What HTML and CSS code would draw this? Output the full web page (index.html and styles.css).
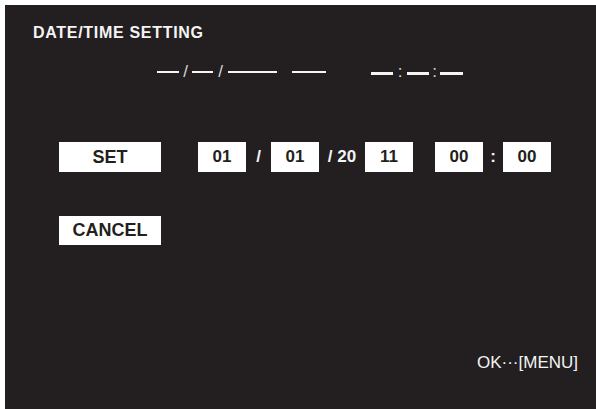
FILE: index.html
```html
<!DOCTYPE html>
<html>
<head>
<meta charset="utf-8">
<link rel="stylesheet" href="styles.css">
</head>
<body>
<div class="screen">
  <div class="title">DATE/TIME SETTING</div>
  <div class="current">
    <span class="dash w22"></span><span class="sep s13">/</span><span class="dash w21"></span><span class="sep s15">/</span><span class="dash w49"></span>
    <span class="dash w34 ml15"></span>
    <div class="time">
      <span class="dash w22"></span><span class="sep colon s14">:</span><span class="dash w22"></span><span class="sep colon s11">:</span><span class="dash w23"></span>
    </div>
  </div>
  <div class="setrow">
    <div class="btn">SET</div>
    <div class="field ml37">01</div>
    <div class="fsep f25">/</div>
    <div class="field">01</div>
    <div class="fsep f46">/ 20</div>
    <div class="field">11</div>
    <div class="field ml22">00</div>
    <div class="fsep f20">:</div>
    <div class="field">00</div>
  </div>
  <div class="cancelrow">
    <div class="btn cancel">CANCEL</div>
  </div>
  <div class="hint">OK···[MENU]</div>
</div>
</body>
</html>
```
FILE: styles.css
```css
html, body {
  margin: 0;
  padding: 0;
  background: #ffffff;
}
body {
  width: 596px;
  height: 409px;
  overflow: hidden;
  font-family: "Liberation Sans", Arial, sans-serif;
}
.screen {
  margin: 5px 0 0 5px;
  width: 591px;
  height: 404px;
  background: #231f20;
  color: #f4f4f4;
  display: flex;
  flex-direction: column;
}
.title {
  padding: 19px 0 0 28px;
  font-size: 16px;
  line-height: 18px;
  font-weight: bold;
  letter-spacing: 0.7px;
}
.current {
  margin-top: 22px;
  height: 16px;
  padding-left: 152px;
  display: flex;
  align-items: center;
}
.time {
  display: flex;
  align-items: center;
  margin-left: 45px;
  padding-top: 3px;
}
.dash {
  display: block;
  height: 2.5px;
  background: #f4f4f4;
}
.w21 { width: 21px; }
.w22 { width: 22px; }
.w23 { width: 23px; }
.w34 { width: 34px; }
.w49 { width: 49px; }
.ml15 { margin-left: 15px; }
.sep {
  display: block;
  text-align: center;
  font-size: 17px;
  line-height: 16px;
  color: #d8d8d8;
}
.colon {
  padding-bottom: 3px;
}
.s11 { width: 11px; }
.s13 { width: 13px; }
.s14 { width: 14px; }
.s15 { width: 15px; }
.setrow {
  margin-top: 62px;
  padding-left: 54px;
  display: flex;
  height: 30px;
}
.btn {
  width: 102px;
  height: 30px;
  background: #ffffff;
  color: #231f20;
  font-weight: bold;
  font-size: 18px;
  line-height: 30px;
  text-align: center;
}
.field {
  width: 48px;
  height: 30px;
  background: #ffffff;
  color: #231f20;
  font-weight: bold;
  font-size: 17px;
  line-height: 30px;
  text-align: center;
}
.ml37 { margin-left: 37px; }
.ml22 { margin-left: 22px; }
.fsep {
  font-weight: bold;
  font-size: 17px;
  line-height: 30px;
  text-align: center;
  color: #f4f4f4;
}
.f20 { width: 20px; }
.f25 { width: 25px; }
.f46 { width: 46px; }
.cancelrow {
  margin-top: 44px;
  padding-left: 54px;
  display: flex;
}
.cancel {
  height: 29px;
  line-height: 29px;
}
.hint {
  margin-top: 108px;
  padding-right: 18px;
  text-align: right;
  font-size: 17px;
  line-height: 19px;
}
```
